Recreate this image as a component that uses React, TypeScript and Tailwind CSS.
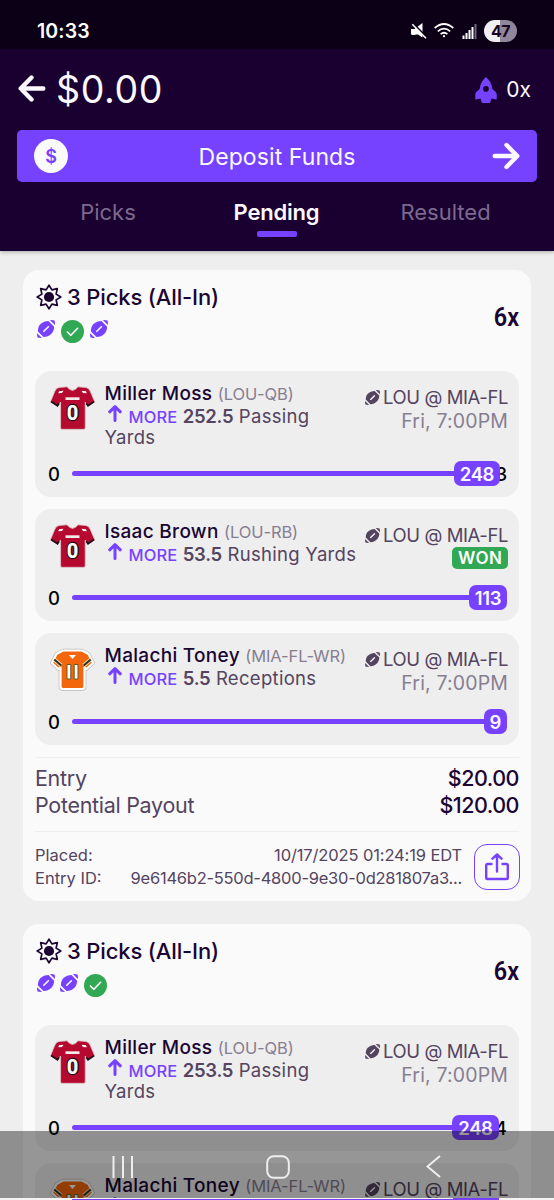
import React from "react";

type Jersey = "cardinal" | "orange";

type Pick = {
  name: string;
  position: string;
  jersey: Jersey;
  line: string;
  stat: string;
  current: string;
  max?: string;
  badgeOffset: string;
  won?: boolean;
};

type Sport = "football" | "won";

type Entry = {
  icons: Sport[];
  multiplier: string;
  picks: Pick[];
};

const entries: Entry[] = [
  {
    icons: ["football", "won", "football"],
    multiplier: "6x",
    picks: [
      {
        name: "Miller Moss",
        position: "(LOU-QB)",
        jersey: "cardinal",
        line: "252.5",
        stat: "Passing\nYards",
        current: "248",
        max: "3",
        badgeOffset: "mr-[7px]",
      },
      {
        name: "Isaac Brown",
        position: "(LOU-RB)",
        jersey: "cardinal",
        line: "53.5",
        stat: "Rushing Yards",
        current: "113",
        badgeOffset: "mr-0",
        won: true,
      },
      {
        name: "Malachi Toney",
        position: "(MIA-FL-WR)",
        jersey: "orange",
        line: "5.5",
        stat: "Receptions",
        current: "9",
        badgeOffset: "mr-0",
      },
    ],
  },
  {
    icons: ["football", "football", "won"],
    multiplier: "6x",
    picks: [
      {
        name: "Miller Moss",
        position: "(LOU-QB)",
        jersey: "cardinal",
        line: "253.5",
        stat: "Passing\nYards",
        current: "248",
        max: "4",
        badgeOffset: "mr-[8.5px]",
      },
      {
        name: "Malachi Toney",
        position: "(MIA-FL-WR)",
        jersey: "orange",
        line: "5.5",
        stat: "Receptions",
        current: "9",
        badgeOffset: "mr-0",
      },
    ],
  },
];

const FootballIcon = ({ className }: { className?: string }) => (
  <svg viewBox="0 0 18 18" className={className} fill="currentColor">
    <path d="M11.500 1.100C5.300 1.200 0.700 5.200 0.900 11.400L6.500 17.100C12.800 16.800 17.200 12.400 17.100 6.700Z" />
    <path d="M12.900 0.100Q15.500 -0.200 17.500 0.500Q18.200 2.600 17.900 5Z" />
    <path d="M0.100 13.200Q-0.100 15.500 0.500 17.500Q2.600 18.100 5 17.900Z" />
    <path d="M6.800 11.300L11.400 6.800" stroke="#fafafa" strokeWidth="1.600" strokeLinecap="round" />
  </svg>
);

const CheckIcon = () => (
  <svg viewBox="0 0 23 23" className="mx-px h-[23px] w-[23px]">
    <circle cx="11.5" cy="11.5" r="11.5" fill="#31a853" />
    <path
      d="M6.400 12L9.900 15.300L16.600 8.300"
      fill="none"
      stroke="#fff"
      strokeWidth="1.6"
      strokeLinecap="round"
      strokeLinejoin="round"
    />
  </svg>
);

const SunIcon = () => (
  <svg viewBox="0 0 26 26" className="h-[26px] w-[26px]">
    <path
      d="M13 1.200L15.900 5.900L21.300 4.700L20.100 10.100L24.800 13L20.100 15.900L21.300 21.300L15.900 20.100L13 24.800L10.100 20.100L4.700 21.300L5.900 15.900L1.200 13L5.900 10.100L4.700 4.700L10.100 5.900Z"
      fill="none"
      stroke="#1a0533"
      strokeWidth="1.700"
      strokeLinejoin="round"
    />
    <circle cx="13" cy="13" r="5.100" fill="#1a0533" />
  </svg>
);

const RocketIcon = () => (
  <svg viewBox="0 0 22 26" className="h-[26px] w-[22px]" fill="#7742ff">
    <path
      fillRule="evenodd"
      d="M11 0C14.500 3 17 7 17.300 12L20.500 14.800Q21.700 16 21.700 17.500V22Q21.700 22.700 21 22.500L16.500 21.600L15.200 25.400Q15 26 14.300 26H7.700Q7 26 6.800 25.400L5.500 21.600L1 22.500Q.3 22.700 .3 22V17.500Q.3 16 1.500 14.800L4.700 12C5 7 7.500 3 11 0ZM11 9.100A2.800 2.800 0 1 0 11 14.700A2.800 2.800 0 1 0 11 9.100Z"
    />
  </svg>
);

const ArrowIcon = ({ className }: { className?: string }) => (
  <svg
    viewBox="0 0 28 28"
    className={className}
    fill="none"
    stroke="currentColor"
    strokeWidth="4.400"
    strokeLinecap="round"
    strokeLinejoin="round"
  >
    <path d="M2.700 14H25M14.500 3L25.300 14L14.500 25" />
  </svg>
);

const CardinalJersey = () => (
  <svg viewBox="0 0 45 44" className="h-[44px] w-[45px]">
    <path
      d="M9 1.500L17 .8Q22.500 8 28 .8L36 1.500Q39 2 40.300 5.500L44.600 15.500L38 20.200L35.200 16V42Q35.200 43.300 33.800 43.300H12Q10.600 43.300 10.600 42V16L7.500 20.200L.6 15.500L4.700 5.500Q6 2 9 1.500Z"
      fill="#b5092f"
      stroke="#dcc5ca"
      strokeWidth=".8"
    />
    <path d="M1 15.500L7.500 19.800L9 17.300M44.200 15.500L38 19.800L36.300 17.300" fill="none" stroke="#25101a" strokeWidth="1.800" />
    <path d="M9 5.200L13.500 4.800L12 7L8.300 7.200ZM36 5.200L31.500 4.800L33 7L36.700 7.200Z" fill="#fff" />
    <path d="M15.500 11.300H29.500V14H15.500Z" fill="#f5e9ec" />
    <text
      x="22.500"
      y="34"
      textAnchor="middle"
      fontFamily="Roboto, sans-serif"
      fontWeight="800"
      fontSize="20"
      fill="#fff"
      stroke="#25101a"
      strokeWidth="2.500"
      paintOrder="stroke"
    >
      0
    </text>
  </svg>
);

const OrangeJersey = () => (
  <svg viewBox="0 0 45 44" className="h-[44px] w-[45px]">
    <path
      d="M13 2.500H32L38.500 6L43 15L36.500 21L34.500 19.500V38.500Q34.500 41 32 41H13Q10.500 41 10.500 38.500V19.500L8.500 21L2 15L6.500 6Z"
      fill="#f3660b"
      stroke="#bdb9b6"
      strokeWidth="3.600"
      strokeLinejoin="round"
    />
    <path
      d="M13 2.500H32L38.500 6L43 15L36.500 21L34.500 19.500V38.500Q34.500 41 32 41H13Q10.500 41 10.500 38.500V19.500L8.500 21L2 15L6.500 6Z"
      fill="#f3660b"
      stroke="#fff"
      strokeWidth="2.200"
      strokeLinejoin="round"
    />
    <path d="M4.300 11.500L11.300 17.500M40.700 11.500L33.700 17.500" stroke="#f5d9a8" strokeWidth="4" />
    <path d="M4.300 11.500L11.300 17.500M40.700 11.500L33.700 17.500" stroke="#2e3423" strokeWidth="2" />
    <path d="M19 7H26L22.500 11Z" fill="#fff" />
    <path d="M17 16.500H20.800V31H17ZM24.200 16.500H28V31H24.200Z" fill="#fff" stroke="#6b5a25" strokeWidth="1" />
  </svg>
);

const ShareIcon = () => (
  <svg
    viewBox="0 0 24 28"
    className="h-[28px] w-[24px]"
    fill="none"
    stroke="#7742ff"
    strokeWidth="2.400"
    strokeLinecap="round"
    strokeLinejoin="round"
  >
    <path d="M12 18.500V1.800M7.500 5.700L12 1.500L16.500 5.700M6.500 11H2.500Q1.200 11 1.200 12.300V24.700Q1.200 26 2.500 26H21.500Q22.800 26 22.800 24.700V12.300Q22.800 11 21.500 11H17.500" />
  </svg>
);

const StatusBar = () => (
  <div className="flex h-[49px] shrink-0 items-center bg-[#0c0016] pt-[13px] pr-[37px] pl-[37px] text-white">
    <span className="text-[19.5px] leading-6 font-semibold tracking-[0.1px]">10:33</span>
    <div className="ml-auto flex items-center">
      <svg viewBox="0 0 16 16" className="h-4 w-4" fill="#fff">
        <path d="M0 6H3.500L11.500 0V14.500L7 11.500H5L3.500 12H1.500Q0 12 0 10.500Z" />
        <path d="M1 -0.500L16 14.500" stroke="#0c0016" strokeWidth="2" />
        <path d="M1.300 1.300L15 15.200" stroke="#fff" strokeWidth="1.600" />
      </svg>
      <svg viewBox="0 0 20 15" className="mb-0.5 ml-[7px] h-[15px] w-5" fill="none" stroke="#fff" strokeWidth="1.700">
        <path d="M.7 5Q10 -3 19.300 5M3.800 8.300Q10 3 16.200 8.300M6.600 11.200Q10 8.300 13.400 11.200" />
        <circle cx="10" cy="13.200" r="1.100" fill="#fff" stroke="none" />
      </svg>
      <svg viewBox="0 0 15 15" className="ml-2 h-[15px] w-[15px]" fill="#fff">
        <path d="M.5 11.500h2V15h-2zM3.500 9h2v6h-2zM6.500 6h2v9h-2zM9.500 3h2v12h-2z" />
        <path d="M12.500 0h2v15h-2z" fill="#6f667a" />
      </svg>
      <div className="ml-[7px] flex h-[22px] w-[33px] items-center justify-center rounded-full bg-[linear-gradient(90deg,#f1eef4_47%,#91879a_47%)] text-base leading-none font-bold tracking-[-0.5px] text-[#150322]">
        47
      </div>
    </div>
  </div>
);

const Header = () => (
  <header className="h-[202px] shrink-0 bg-[#190030] text-[#fcf8ff] shadow-[0_1px_4px_rgba(0,0,0,0.3)]">
    <div className="flex h-[81px] items-center pr-[23px] pl-[18px]">
      <ArrowIcon className="h-7 w-7 -translate-y-[1.5px] rotate-180" />
      <span className="ml-[10px] text-[37.5px] leading-10 tracking-[0.6px]">$0.00</span>
      <div className="ml-auto flex items-center gap-[9px]">
        <RocketIcon />
        <span className="text-[21px]">0x</span>
      </div>
    </div>
    <div className="mr-[17px] ml-[17px] flex h-[52px] items-center rounded-[5px] bg-[#7742ff] px-[17px]">
      <div className="flex h-[34px] w-[34px] items-center justify-center rounded-full bg-[#fafafa] text-[18px] font-semibold text-[#7742ff]">
        $
      </div>
      <span className="mr-[6px] flex-1 pt-0.5 text-center text-[23px] tracking-[0.1px]">Deposit Funds</span>
      <ArrowIcon className="h-7 w-7" />
    </div>
    <nav className="flex pt-[16px] text-[22px] leading-7 text-[#7b6a8e]">
      <div className="ml-[24px] flex w-[168px] justify-center">Picks</div>
      <div className="flex w-[169px] flex-col items-center font-semibold tracking-[-0.2px] text-[#fcf8ff]">
        Pending
        <div className="mt-[5px] h-[6px] w-10 rounded-[2px] bg-[#7742ff]" />
      </div>
      <div className="flex w-[169px] justify-center">Resulted</div>
    </nav>
  </header>
);

type SliderProps = {
  current: string;
  max?: string;
  badgeOffset: string;
};

const Slider: React.FC<SliderProps> = ({ current, max, badgeOffset }) => (
  <div className="relative flex h-[25px] items-center pl-[13px]">
    <span className="w-6 pt-0.5 text-[18.5px] font-medium text-black">0</span>
    <div className="h-[5.5px] flex-1 rounded-l-full bg-[#7742ff]" />
    {max && <span className="absolute right-[12px] pt-0.5 text-[18.5px] font-medium text-black">{max}</span>}
    <span
      className={`relative flex h-[25px] items-center rounded-[7px] bg-[#7742ff] px-[6px] pt-0.5 text-[18.5px] font-semibold tracking-[-0.4px] text-[#fcf8ff] ${
        badgeOffset
      }`}
    >
      {current}
    </span>
    <div className="w-3" />
  </div>
);

const PickRow = ({ pick }: { pick: Pick }) => (
  <div className="rounded-[16px] bg-[#eeeeee] pt-[10px] pb-[11px]">
    <div className="flex min-h-[53px] pr-[11px] pl-[15px]">
      <div className="mt-[5px] h-[44px] w-[45px]">
        {pick.jersey === "cardinal" ? <CardinalJersey /> : <OrangeJersey />}
      </div>
      <div className="ml-[9.5px] whitespace-nowrap">
        <p className="h-[25px] text-[19px] leading-[25px] font-medium tracking-[0.3px] text-[#1a0533]">
          {pick.name}{" "}
          <span className="text-[16.5px] leading-none font-normal tracking-[-0.1px] text-[#877e91]">
            {pick.position}
          </span>
        </p>
        <p className="text-[18.5px] leading-[21px] tracking-[0.3px] whitespace-pre-line text-[#54445f]">
          <svg
            viewBox="0 0 14 17"
            className="relative -top-px mr-[7px] ml-[3px] inline h-[17px] w-[14px] align-top"
            fill="none"
            stroke="#7742ff"
            strokeWidth="3"
            strokeLinecap="round"
            strokeLinejoin="round"
          >
            <path d="M7 15.500V2.500M1.700 6.800L7 1.700L12.300 6.800" />
          </svg>
          <span className="text-[16.5px] leading-none font-medium tracking-[0.1px] text-[#7742ff]">MORE</span>{" "}
          <span className="leading-none font-semibold tracking-[-0.3px]">{pick.line}</span> {pick.stat}
        </p>
      </div>
      <div className="mt-[4px] ml-auto flex flex-col items-end whitespace-nowrap">
        <div className="flex items-center text-[18.5px] leading-6 tracking-[-0.4px] text-[#54445f]">
          <FootballIcon className="mr-[3px] h-[15px] w-[15px]" />
          LOU @ MIA-FL
        </div>
        {pick.won ? (
          <span className="flex h-[22px] items-center rounded-[5px] bg-[#31a853] px-[5.5px] pt-px text-[17px] font-semibold tracking-[0.5px] text-white">
            WON
          </span>
        ) : (
          <span className="text-[19.5px] leading-6 tracking-[0.15px] text-[#877e91]">Fri, 7:00PM</span>
        )}
      </div>
    </div>
    <div className="mt-[13px]">
      <Slider current={pick.current} max={pick.max} badgeOffset={pick.badgeOffset} />
    </div>
  </div>
);

const EntryCard = ({ entry }: { entry: Entry }) => (
  <section className="shrink-0 rounded-[16px] bg-[#fafafa] px-3 pb-[11.5px]">
    <div className="flex h-[101px] justify-between pt-[13px]">
      <div>
        <div className="flex h-7 items-center gap-[5px] pl-[1px]">
          <SunIcon />
          <h2 className="text-[22px] leading-7 font-medium tracking-[-0.15px] text-[#1a0533]">3 Picks (All-In)</h2>
        </div>
        <div className="mt-[9px] flex gap-[5px] pl-[2px]">
          {entry.icons.map((icon, i) =>
            icon === "won" ? <CheckIcon key={i} /> : <FootballIcon key={i} className="h-[18px] w-[18px] text-[#7742ff]" />
          )}
        </div>
      </div>
      <span className="mt-[18px] origin-right scale-x-[0.9] font-[Roboto] text-[26px] leading-8 font-semibold text-[#1a0533]">
        {entry.multiplier}
      </span>
    </div>
    <div className="flex flex-col gap-3">
      {entry.picks.map((pick) => (
        <PickRow key={pick.name} pick={pick} />
      ))}
    </div>
    <div className="mt-[11.5px] flex h-[75px] flex-col border-y border-[#efefef] pt-[7px] text-[21.5px] leading-[27.5px] tracking-[-0.3px] text-[#54445f]">
      <div className="flex justify-between">
        Entry <span className="font-medium tracking-[-0.5px] text-[#1a0533]">$20.00</span>
      </div>
      <div className="flex justify-between">
        Potential Payout <span className="font-medium tracking-[-0.5px] text-[#1a0533]">$120.00</span>
      </div>
    </div>
    <div className="mt-[12px] -mr-px flex items-center gap-3">
      <div className="flex-1 text-[16.5px] leading-[23px] text-[#54445f]">
        <div className="flex justify-between">
          Placed: <span className="tracking-[-0.13px]">10/17/2025 01:24:19 EDT</span>
        </div>
        <div className="flex justify-between">
          Entry ID: <span className="tracking-[-0.25px]">9e6146b2-550d-4800-9e30-0d281807a3...</span>
        </div>
      </div>
      <button className="flex h-[46px] w-[46px] items-center justify-center rounded-[13px] border border-[#7742ff]">
        <ShareIcon />
      </button>
    </div>
  </section>
);

const NavigationBar = () => (
  <div className="absolute bottom-0 left-0 h-[69px] w-full">
    <div className="flex h-[67px] items-center bg-black/40 pt-1">
      <svg viewBox="0 0 22 22" className="ml-[112px] h-[22px] w-[22px]" stroke="#eee" strokeWidth="2">
        <path d="M1.500 0V22M11 0V22M20 0V22" />
      </svg>
      <svg viewBox="0 0 24 24" className="ml-[132px] h-6 w-6" fill="none" stroke="#eee" strokeWidth="2">
        <rect x="1.200" y="1.200" width="21.600" height="21.600" rx="6.500" />
      </svg>
      <svg viewBox="0 0 15 23" className="ml-[136px] h-[23px] w-[15px]" fill="none" stroke="#eee" strokeWidth="2">
        <path d="M14 1L1.500 11.500L14 22" />
      </svg>
    </div>
    <div className="flex h-[2px] items-end bg-[#f4f4f4] pl-[72px]">
      <div className="h-px w-[381px] bg-[#7742ff]" />
      <div className="h-[2px] w-[46px] bg-[#7742ff]" />
    </div>
  </div>
);

const App = () => (
  <div className="relative flex h-[1200px] w-[554px] flex-col overflow-hidden bg-[#eeeeee] font-[Inter,sans-serif]">
    <StatusBar />
    <Header />
    <main className="flex shrink-0 flex-col gap-[23px] pt-[19px] pr-[23px] pl-[23px]">
      {entries.map((entry, i) => (
        <EntryCard key={i} entry={entry} />
      ))}
    </main>
    <NavigationBar />
  </div>
);

export default App;
